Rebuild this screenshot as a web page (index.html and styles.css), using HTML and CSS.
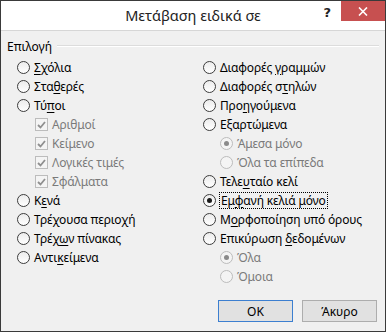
FILE: index.html
```html
<!DOCTYPE html>
<html>

<head>
  <meta charset="utf-8">
  <link rel="stylesheet" href="styles.css">
</head>

<body>
  <div class="window">
    <div class="titlebar">
      <span></span>
      <span class="title">Μετάβαση ειδικά σε</span>
      <div class="controls">
        <span class="help">?</span>
        <span class="close">
          <svg width="10" height="9" viewBox="0 0 10 9">
            <path d="M1 0.5 L9 8.5 M9 0.5 L1 8.5" stroke="#fff" stroke-width="1.6" fill="none" />
          </svg>
        </span>
      </div>
    </div>

    <div class="client">
      <div class="legend">
        <span>Επιλογή</span>
        <span class="rule"></span>
      </div>

      <div class="options">
        <div class="column">
          <div class="row"><span class="radio"></span><span class="label"><u>Σ</u>χόλια</span></div>
          <div class="row"><span class="radio"></span><span class="label">Στα<u>θ</u>ερές</span></div>
          <div class="row"><span class="radio"></span><span class="label">Τύ<u>π</u>οι</span></div>
          <div class="row sub disabled"><span class="check"><svg width="9" height="8" viewBox="0 0 9 8"><path d="M1 4 L3.5 6.5 L8 1" stroke="#8f8f8f" stroke-width="1.8" fill="none" /></svg></span><span class="label">Αριθμοί</span></div>
          <div class="row sub disabled"><span class="check"><svg width="9" height="8" viewBox="0 0 9 8"><path d="M1 4 L3.5 6.5 L8 1" stroke="#8f8f8f" stroke-width="1.8" fill="none" /></svg></span><span class="label">Κείμενο</span></div>
          <div class="row sub disabled"><span class="check"><svg width="9" height="8" viewBox="0 0 9 8"><path d="M1 4 L3.5 6.5 L8 1" stroke="#8f8f8f" stroke-width="1.8" fill="none" /></svg></span><span class="label">Λογικές τιμές</span></div>
          <div class="row sub disabled"><span class="check"><svg width="9" height="8" viewBox="0 0 9 8"><path d="M1 4 L3.5 6.5 L8 1" stroke="#8f8f8f" stroke-width="1.8" fill="none" /></svg></span><span class="label">Σφάλματα</span></div>
          <div class="row"><span class="radio"></span><span class="label">Κ<u>ε</u>νά</span></div>
          <div class="row"><span class="radio"></span><span class="label">Τρέχουσα περιο<u>χ</u>ή</span></div>
          <div class="row"><span class="radio"></span><span class="label">Τρέχ<u>ω</u>ν πίνακας</span></div>
          <div class="row"><span class="radio"></span><span class="label">Αντι<u>κ</u>είμενα</span></div>
        </div>

        <div class="column">
          <div class="row"><span class="radio"></span><span class="label">Διαφορές <u>γ</u>ραμμών</span></div>
          <div class="row"><span class="radio"></span><span class="label">Διαφορές σ<u>τ</u>ηλών</span></div>
          <div class="row"><span class="radio"></span><span class="label">Προ<u>η</u>γούμενα</span></div>
          <div class="row"><span class="radio"></span><span class="label">Εξαρτώμενα</span></div>
          <div class="row sub disabled"><span class="radio checked"></span><span class="label">Άμεσα μόνο</span></div>
          <div class="row sub disabled"><span class="radio"></span><span class="label">Όλα τα επίπεδα</span></div>
          <div class="row"><span class="radio"></span><span class="label">Τελε<u>υ</u>ταίο κελί</span></div>
          <div class="row"><span class="radio checked"></span><span class="label focus">Εμ<u>φ</u>ανή κελιά μόνο</span></div>
          <div class="row"><span class="radio"></span><span class="label">Μ<u>ο</u>ρφοποίηση υπό όρους</span></div>
          <div class="row"><span class="radio"></span><span class="label">Επικύρωση <u>δ</u>εδομένων</span></div>
          <div class="row sub disabled"><span class="radio checked"></span><span class="label">Όλα</span></div>
          <div class="row sub disabled"><span class="radio"></span><span class="label">Όμοια</span></div>
        </div>
      </div>

      <div class="buttons">
        <button class="btn default">OK</button>
        <button class="btn">Άκυρο</button>
      </div>
    </div>
  </div>
</body>

</html>
```

FILE: styles.css
```css
body {
  margin: 0;
  font-family: 'Noto Sans', sans-serif;
  font-size: 12px;
  color: #000;
}

.window {
  width: 386px;
  height: 332px;
  box-sizing: border-box;
  border: 1px solid #3a3a3a;
  background-color: #f0f0f0;
  display: flex;
  flex-direction: column;
}

.titlebar {
  height: 29px;
  background-color: #fff;
  border-bottom: 1px solid #d6d6d6;
  display: grid;
  grid-template-columns: 1fr auto 1fr;
}

.title {
  font-size: 14.5px;
  line-height: 29px;
  color: #222;
}

.controls {
  justify-self: end;
  display: flex;
  align-items: flex-start;
}

.help {
  font-family: 'DejaVu Sans', sans-serif;
  font-weight: bold;
  font-size: 13px;
  line-height: 13px;
  color: #222;
  margin: 5px 10px 0 0;
}

.close {
  width: 44px;
  height: 20px;
  background-color: #c75050;
  display: flex;
  justify-content: center;
  align-items: center;
}

.client {
  flex: 1;
  padding: 7px 6px 0 6px;
  display: flex;
  flex-direction: column;
}

.legend {
  height: 16px;
  display: flex;
  align-items: center;
}

.rule {
  flex: 1;
  height: 1px;
  margin-left: 5px;
  background-color: #dcdcdc;
  border-bottom: 1px solid #fff;
}

.options {
  margin-top: 4px;
  padding-left: 10px;
  display: grid;
  grid-template-columns: 186px 1fr;
}

.row {
  height: 19px;
  display: flex;
  align-items: center;
  white-space: nowrap;
}

.row.sub {
  padding-left: 17px;
}

.label {
  letter-spacing: -0.15px;
}

.disabled {
  color: #7a7a7a;
}

.radio {
  width: 13px;
  height: 13px;
  box-sizing: border-box;
  border: 1px solid #3c3c3c;
  border-radius: 50%;
  background: linear-gradient(#ececec, #fff);
  margin-right: 4px;
  flex-shrink: 0;
  display: flex;
  justify-content: center;
  align-items: center;
}

.radio.checked::after {
  content: '';
  width: 5px;
  height: 5px;
  border-radius: 50%;
  background-color: #1a1a1a;
}

.disabled .radio {
  border-color: #bcbcbc;
  background: #f4f4f4;
}

.disabled .radio.checked::after {
  background-color: #8a8a8a;
}

.check {
  width: 13px;
  height: 13px;
  box-sizing: border-box;
  border: 1px solid #bcbcbc;
  background-color: #f4f4f4;
  margin: 0 4px 0 1px;
  flex-shrink: 0;
  display: flex;
  justify-content: center;
  align-items: center;
}

.focus {
  outline: 1px dotted #000;
  outline-offset: 0;
  padding: 0 1px;
  line-height: 15px;
}

u {
  text-underline-offset: 2px;
}

.buttons {
  margin-top: 14px;
  padding-right: 2px;
  display: flex;
  justify-content: flex-end;
  gap: 9px;
}

.btn {
  width: 75px;
  height: 22px;
  box-sizing: border-box;
  border: 1px solid #adadad;
  background-color: #e1e1e1;
  font-family: inherit;
  font-size: 12px;
  color: #000;
  padding: 0;
}

.btn.default {
  border-color: #3c7fd0;
}
```
